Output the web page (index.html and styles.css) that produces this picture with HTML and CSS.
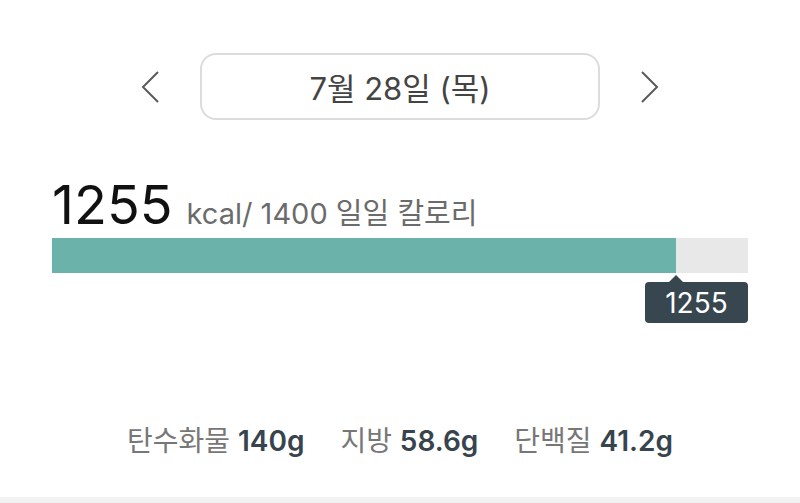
FILE: index.html
```html
<!DOCTYPE html>
<html lang="ko">
<head>
    <meta charset="UTF-8">
    <meta name="viewport" content="width=device-width, initial-scale=1.0">
    <title>일일 칼로리</title>
    <link rel="stylesheet" href="styles.css">
</head>
<body>
    <div class="page">
        <div class="date-nav">
            <button class="arrow" aria-label="이전 날">
                <svg width="20" height="34" viewBox="0 0 20 34">
                    <polyline points="18,2 3,17 18,32" fill="none" stroke="#5a5a5a" stroke-width="2"/>
                </svg>
            </button>
            <div class="date-box">7월 28일 (목)</div>
            <button class="arrow" aria-label="다음 날">
                <svg width="20" height="34" viewBox="0 0 20 34">
                    <polyline points="2,2 17,17 2,32" fill="none" stroke="#5a5a5a" stroke-width="2"/>
                </svg>
            </button>
        </div>

        <div class="calories">
            <div class="cal-title">
                <span class="cal-value">1255</span>
                <span class="cal-goal">kcal/ 1400 일일 칼로리</span>
            </div>
            <div class="bar">
                <div class="bar-fill" style="width: 89.64%"></div>
                <div class="bar-tip">1255</div>
            </div>
        </div>

        <div class="macros">
            <span class="macro">탄수화물 <b>140g</b></span>
            <span class="macro">지방 <b>58.6g</b></span>
            <span class="macro">단백질 <b>41.2g</b></span>
        </div>
    </div>
    <div class="footer-strip"></div>
</body>
</html>
```

FILE: styles.css
```css
* {
    margin: 0;
    padding: 0;
    box-sizing: border-box;
    font-family: 'Inter', 'Noto Sans CJK KR', sans-serif;
}

body {
    background: #fff;
    width: 800px;
    height: 503px;
    overflow: hidden;
    display: flex;
    flex-direction: column;
}

.page {
    flex: 1;
    padding: 53px 52px 0 52px;
}

.date-nav {
    display: flex;
    justify-content: center;
    align-items: center;
    gap: 40px;
}

.date-nav .arrow {
    background: none;
    border: none;
    width: 20px;
    height: 34px;
    display: flex;
    cursor: pointer;
}

.date-box {
    width: 400px;
    height: 67px;
    border: 2px solid #dcdcdc;
    border-radius: 16px;
    display: flex;
    justify-content: center;
    align-items: center;
    font-size: 31px;
    color: #444;
}

.calories {
    margin-top: 60px;
}

.cal-title {
    display: flex;
    align-items: baseline;
    gap: 14px;
    height: 50px;
}

.cal-value {
    font-size: 54px;
    color: #111;
    line-height: 50px;
}

.cal-goal {
    font-size: 29px;
    color: #6b6b6b;
}

.bar {
    position: relative;
    margin-top: 8px;
    height: 35px;
    background: #e8e8e8;
}

.bar-fill {
    height: 100%;
    background: #6bb3aa;
}

.bar-tip {
    position: absolute;
    right: 0;
    top: 44px;
    width: 103px;
    height: 41px;
    border-radius: 4px;
    background: #37464f;
    color: #fff;
    font-size: 28px;
    display: flex;
    justify-content: center;
    align-items: center;
}

.bar-tip::before {
    content: '';
    position: absolute;
    left: 24px;
    top: -7px;
    border-left: 7px solid transparent;
    border-right: 7px solid transparent;
    border-bottom: 7px solid #37464f;
}

.macros {
    margin-top: 152px;
    display: flex;
    justify-content: center;
    gap: 36px;
    font-size: 28px;
    line-height: 32px;
    color: #777;
}

.macro b {
    color: #37444e;
    font-weight: 600;
}

.footer-strip {
    height: 6px;
    background: #f2f2f2;
}
```
